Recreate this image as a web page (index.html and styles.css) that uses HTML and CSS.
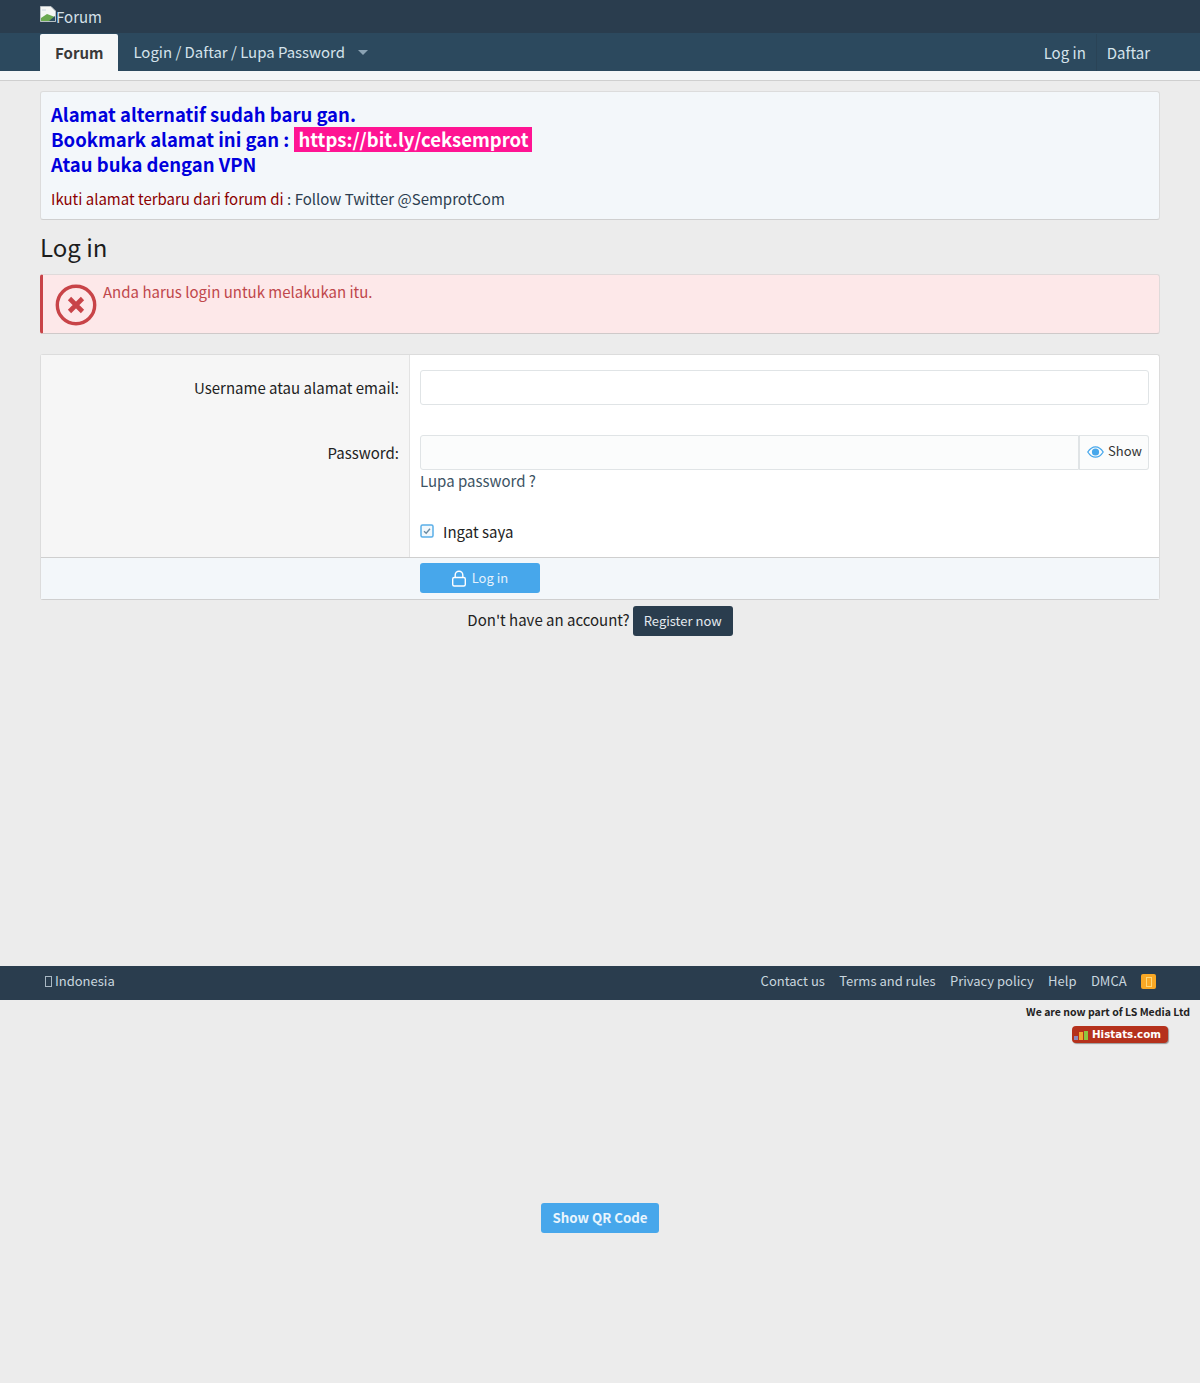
FILE: index.html
```html
<!DOCTYPE html>
<html lang="id">
<head>
    <meta charset="UTF-8">
    <title>Log in | Forum</title>
    <link rel="stylesheet" href="styles.css">
</head>
<body>
    <div class="top-bar">
        <a class="logo">
            <svg class="broken-img" width="16" height="16" viewBox="0 0 16 16">
                <path d="M0.5 0.5H11L15.5 5V15.5H0.5Z" fill="#f4f6f4" stroke="#b8c0c4"/>
                <path d="M1 12L7 8L15 11V15H1Z" fill="#6aa84f"/>
                <path d="M2 3H6V5H2Z" fill="#dfe5ea"/>
                <path d="M9 15L15 10V15Z" fill="#2e4f63"/>
            </svg><span>Forum</span>
        </a>
    </div>

    <div class="nav-bar">
        <div class="nav-left">
            <a class="nav-tab active">Forum</a>
            <a class="nav-tab">Login / Daftar / Lupa Password <i class="caret"></i></a>
        </div>
        <div class="nav-right">
            <a class="nav-link">Log in</a>
            <a class="nav-link">Daftar</a>
        </div>
    </div>
    <div class="sub-nav"></div>

    <div class="page">
        <div class="notice">
            <div class="notice-big">Alamat alternatif sudah baru gan.</div>
            <div class="notice-big">Bookmark alamat ini gan : <span class="pink">https://bit.ly/ceksemprot</span></div>
            <div class="notice-big">Atau buka dengan VPN</div>
            <div class="notice-small"><span class="dark-red">Ikuti alamat terbaru dari forum di</span> : Follow Twitter @SemprotCom</div>
        </div>

        <h1 class="page-title">Log in</h1>

        <div class="error-box">
            <svg class="error-icon" width="42" height="42" viewBox="0 0 42 42">
                <circle cx="21" cy="21" r="18.7" fill="none" stroke="#c84448" stroke-width="3.4"/>
                <path d="M14.5 14.5L27.5 27.5M27.5 14.5L14.5 27.5" fill="none" stroke="#c84448" stroke-width="4.6"/>
            </svg>
            <div>Anda harus login untuk melakukan itu.</div>
        </div>

        <form class="login-form">
            <div class="form-body">
                <div class="form-row row-user">
                    <label class="form-label">Username atau alamat email:</label>
                    <div class="form-field"><input class="input" type="text"></div>
                </div>
                <div class="form-row row-pass">
                    <label class="form-label">Password:</label>
                    <div class="form-field">
                        <div class="input-group">
                            <input class="input" type="password">
                            <span class="show-btn">
                                <svg width="17" height="12" viewBox="0 0 17 12">
                                    <path d="M0.8 6C3 2.5 5.6 0.8 8.5 0.8S14 2.5 16.2 6C14 9.5 11.4 11.2 8.5 11.2S3 9.5 0.8 6Z" fill="none" stroke="#47a7eb" stroke-width="1.3"/>
                                    <circle cx="8.5" cy="6" r="3.6" fill="#47a7eb"/>
                                </svg>
                                Show
                            </span>
                        </div>
                        <a class="forgot">Lupa password ?</a>
                    </div>
                </div>
                <div class="form-row row-remember">
                    <div class="form-label"></div>
                    <div class="form-field">
                        <label class="check">
                            <svg width="14" height="14" viewBox="0 0 14 14">
                                <rect x="1" y="1" width="12" height="12" rx="1.5" fill="#f2f8fc" stroke="#5aaee8" stroke-width="1.5"/>
                                <path d="M4 7.2L6.2 9.2L10 4.8" fill="none" stroke="#6b8aa0" stroke-width="1.4"/>
                            </svg>
                            Ingat saya
                        </label>
                    </div>
                </div>
            </div>
            <div class="form-footer">
                <button class="btn-primary" type="button">
                    <svg width="16" height="17" viewBox="0 0 16 17">
                        <rect x="1.7" y="7.5" width="12.6" height="8.5" rx="1.5" fill="none" stroke="#fff" stroke-width="1.4"/>
                        <path d="M4.2 7.5V5a3.8 3.8 0 0 1 7.6 0V7.5" fill="none" stroke="#fff" stroke-width="1.4"/>
                    </svg>
                    Log in
                </button>
            </div>
        </form>

        <div class="register-row">
            <span class="register-text">Don't have an account?</span>
            <a class="btn-dark">Register now</a>
        </div>
    </div>

    <div class="footer">
        <a class="lang"><span class="tofu"></span> Indonesia</a>
        <div class="footer-links">
            <a>Contact us</a>
            <a>Terms and rules</a>
            <a>Privacy policy</a>
            <a>Help</a>
            <a>DMCA</a>
            <span class="rss"><span class="rss-tofu"></span></span>
        </div>
    </div>

    <div class="credits">
        <div class="credits-text">We are now part of LS Media Ltd</div>
        <div class="histats">
            <svg width="15" height="10" viewBox="0 0 15 10">
                <rect x="0" y="6" width="4" height="4" fill="#8d86b8"/>
                <rect x="5" y="2" width="4" height="8" fill="#f0a830"/>
                <rect x="10" y="1" width="4" height="9" fill="#8cc63f"/>
            </svg>
            <span>Histats.com</span>
        </div>
    </div>

    <div class="qr-row">
        <button class="btn-qr" type="button">Show QR Code</button>
    </div>
</body>
</html>
```

FILE: styles.css
```css
* {
    box-sizing: border-box;
}

body {
    margin: 0;
    height: 1383px;
    background: #ececec;
    color: #222;
    font-family: "Noto Sans CJK SC", "Noto Sans", sans-serif;
    font-size: 15px;
    line-height: 1.4;
}

.top-bar {
    height: 33px;
    padding: 6px 40px 0;
    background: #2a3d4e;
    color: #d5e0e8;
}

.logo {
    display: flex;
    align-items: flex-start;
    line-height: 22px;
}

.broken-img {
    flex: none;
}

.nav-bar {
    display: flex;
    justify-content: space-between;
    height: 38px;
    padding: 1px 40px 0;
    background: #2c495e;
    color: #d5e3ec;
}

.nav-left,
.nav-right {
    display: flex;
}

.nav-tab {
    display: flex;
    align-items: center;
    height: 37px;
    padding: 0 15px 0 16px;
    border-radius: 2px 2px 0 0;
}

.nav-tab.active {
    padding: 0 15px;
    background: #f5f7f8;
    color: #3a3a3a;
    font-weight: 700;
}

.caret {
    width: 0;
    height: 0;
    margin-left: 13px;
    border-left: 5px solid transparent;
    border-right: 5px solid transparent;
    border-top: 5px solid #8ba3b4;
}

.nav-left .nav-tab:not(.active) {
    margin-left: -1px;
    font-size: 14.95px;
}

.nav-link {
    display: flex;
    align-items: center;
    height: 37px;
    padding: 0 10px;
}

.nav-link + .nav-link {
    border-left: 1px solid #2a4356;
}

.sub-nav {
    height: 10px;
    background: #f5f7f8;
    border-bottom: 1px solid #cfcfcf;
}

.page {
    height: 885px;
    padding: 11px 40px 0;
}

.notice {
    height: 129px;
    margin-top: -1px;
    padding: 10px 10px 0;
    background: #f3f7fa;
    border: 1px solid #dcdcdc;
    border-bottom-color: #cfcfcf;
    border-radius: 3px;
    color: #2c3e50;
}

.notice-big {
    height: 25px;
    color: #0000dd;
    font-size: 18.5px;
    font-weight: 700;
    line-height: 25px;
}

.pink {
    display: inline-block;
    height: 25px;
    margin-left: 1px;
    padding: 0 4px;
    background: #ff1493;
    color: #fff;
}

.notice-small {
    margin-top: 10px;
    line-height: 24px;
}

.dark-red {
    color: #8b0000;
}

.page-title {
    margin: 10px 0 0;
    color: #1d1d1d;
    font-size: 24px;
    font-weight: 400;
    line-height: 34px;
}

.error-box {
    display: flex;
    height: 60px;
    margin-top: 10px;
    padding: 6px 10px 0 10px;
    background: #fde8e9;
    border: 1px solid #dfdada;
    border-left: 3px solid #c84448;
    border-bottom-color: #cfc9c9;
    border-radius: 3px;
    color: #c0474b;
}

.error-icon {
    flex: none;
    margin: 3px 6px 0 2px;
}

.login-form {
    margin-top: 20px;
    background: #fff;
    border: 1px solid #dcdcdc;
    border-bottom-color: #cfcfcf;
    border-radius: 3px;
}

.form-row {
    display: grid;
    grid-template-columns: 369px 1fr;
}

.form-label {
    padding: 22px 10px 0 0;
    background: #f6f6f6;
    border-right: 1px solid #e3e3e3;
    text-align: right;
}

.form-field {
    padding: 15px 10px 0;
}

.row-user {
    height: 65px;
}

.row-pass {
    height: 81px;
}

.row-remember {
    height: 56px;
}

.input {
    display: block;
    width: 100%;
    height: 35px;
    padding: 0 8px;
    background: #fff;
    border: 1px solid #e0e4e6;
    border-radius: 3px;
    outline: none;
}

.input-group {
    display: flex;
}

.input-group .input {
    flex: 1;
    background: #fbfcfc;
    border-radius: 3px 0 0 3px;
}

.show-btn {
    display: flex;
    align-items: center;
    gap: 4px;
    width: 70px;
    padding: 0 0 2px 8px;
    background: #fbfcfc;
    border: 1px solid #e0e4e6;
    border-left: 0;
    border-radius: 0 3px 3px 0;
    box-shadow: inset 1px 0 0 #e0e4e6;
    color: #333;
    font-size: 13px;
}

.forgot {
    display: block;
    color: #3c5364;
}

.row-remember .form-field {
    padding-top: 20px;
}

.check {
    display: flex;
    align-items: center;
    gap: 9px;
    line-height: 22px;
}

.check svg {
    margin-bottom: 2px;
}

.form-footer {
    height: 42px;
    padding: 5px 0 0 379px;
    background: #f3f7fa;
    border-top: 1px solid #cfcfcf;
}

.btn-primary {
    display: flex;
    align-items: center;
    justify-content: center;
    gap: 5px;
    width: 120px;
    height: 30px;
    padding: 0 1px 2px 0;
    background: #47a7eb;
    border: 0;
    border-radius: 3px;
    color: #e4f2fc;
    font-family: inherit;
    font-size: 13px;
}

.btn-primary svg {
    margin-top: 2px;
}

.register-row {
    display: flex;
    align-items: center;
    justify-content: center;
    gap: 3px;
    margin-top: 6px;
    color: #222;
}

.register-text {
    margin-bottom: 4px;
}

.btn-dark {
    display: block;
    height: 30px;
    padding: 0 11px;
    background: #2a3d4e;
    border-radius: 3px;
    color: #e4eaef;
    font-size: 13px;
    line-height: 30px;
}

.footer {
    display: flex;
    align-items: center;
    justify-content: space-between;
    height: 34px;
    padding: 0 44px 3px;
    background: #2a3d4e;
    color: #c9d6df;
    font-size: 13px;
}

.lang {
    margin-left: 1px;
}

.tofu {
    display: inline-block;
    width: 7px;
    height: 11px;
    border: 1px solid #a9b8c3;
    vertical-align: -1px;
}

.footer-links {
    display: flex;
    align-items: center;
    gap: 14.4px;
}

.rss {
    display: flex;
    align-items: center;
    justify-content: center;
    width: 15px;
    height: 15px;
    background: #f9a825;
    border-radius: 2px;
}

.rss-tofu {
    width: 6px;
    height: 10px;
    border: 1px solid #ffd778;
}

.credits {
    display: flex;
    flex-direction: column;
    align-items: flex-end;
    height: 203px;
    padding: 3px 10px 0;
}

.credits-text {
    color: #222;
    font-size: 10.5px;
    font-weight: 700;
    line-height: 17px;
}

.histats {
    display: flex;
    align-items: center;
    gap: 3px;
    width: 96px;
    height: 17px;
    margin: 6px 22px 0 0;
    padding-left: 2px;
    background: #b5311c;
    border-radius: 4px;
    box-shadow: 1px 1px 1px #999;
    color: #fff;
    font-family: "DejaVu Sans", sans-serif;
    font-size: 10.3px;
    font-weight: 700;
    line-height: 17px;
}

.qr-row {
    display: flex;
    justify-content: center;
}

.btn-qr {
    width: 118px;
    height: 30px;
    padding: 0 0 2px;
    background: #47a7eb;
    border: 0;
    border-radius: 3px;
    color: #e9f5fd;
    font-family: inherit;
    font-size: 13.3px;
    font-weight: 700;
}
```
